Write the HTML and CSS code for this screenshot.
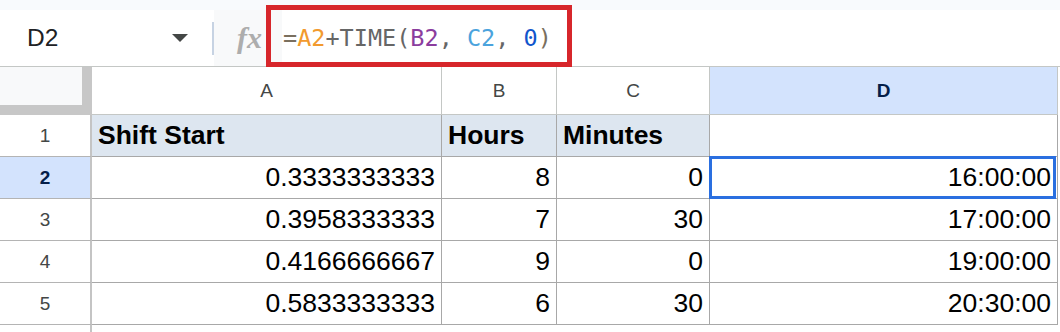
FILE: index.html
```html
<!DOCTYPE html>
<html>
<head lang="en">
    <meta charset="UTF-8">
    <title>Shift end times</title>
    <link rel="stylesheet" href="styles.css">
</head>
<body>
<div class="sheet">
    <div class="top-strip"></div>
    <div class="formula-bar">
        <div class="name-box">
            <span>D2</span>
            <svg width="16" height="8" viewBox="0 0 16 8"><path d="M0 0 L16 0 L8 8 Z" fill="#444746"/></svg>
        </div>
        <div class="divider"></div>
        <div class="fx">fx</div>
        <div class="formula"><span class="f-eq">=</span><span class="f-a">A2</span>+TIME(<span class="f-b">B2</span>, <span class="f-c">C2</span>, <span class="f-num">0</span><span class="f-eq">)</span></div>
        <div class="formula-mark"></div>
    </div>
    <div class="grid">
        <div class="corner"></div>
        <div class="col-head">A</div>
        <div class="col-head">B</div>
        <div class="col-head">C</div>
        <div class="col-head sel">D</div>

        <div class="row-head">1</div>
        <div class="label">Shift Start</div>
        <div class="label">Hours</div>
        <div class="label">Minutes</div>
        <div></div>

        <div class="row-head sel">2</div>
        <div class="num">0.3333333333</div>
        <div class="num">8</div>
        <div class="num">0</div>
        <div class="num active">16:00:00</div>

        <div class="row-head">3</div>
        <div class="num">0.3958333333</div>
        <div class="num">7</div>
        <div class="num">30</div>
        <div class="num">17:00:00</div>

        <div class="row-head">4</div>
        <div class="num">0.4166666667</div>
        <div class="num">9</div>
        <div class="num">0</div>
        <div class="num">19:00:00</div>

        <div class="row-head">5</div>
        <div class="num">0.5833333333</div>
        <div class="num">6</div>
        <div class="num">30</div>
        <div class="num">20:30:00</div>

        <div class="row-head tail"></div>
        <div class="tail"></div>
        <div class="tail"></div>
        <div class="tail"></div>
        <div class="tail"></div>
    </div>
</div>
</body>
</html>
```

FILE: styles.css
```css
body {
    margin: 0;
    background: #fff;
    font-family: "Liberation Sans", Arial, sans-serif;
}
.sheet {
    width: 1060px;
}
.top-strip {
    height: 10px;
    background: #f8fafd;
}
.formula-bar {
    position: relative;
    display: flex;
    align-items: center;
    height: 56px;
    border-bottom: 1px solid #c4c7c5;
}
.name-box {
    display: flex;
    align-items: center;
    width: 212px;
    height: 100%;
    padding-left: 27px;
    box-sizing: border-box;
    font-size: 24.5px;
    color: #202124;
}
.name-box svg {
    margin-left: auto;
    margin-right: 24px;
}
.divider {
    width: 2px;
    height: 33px;
    background: #c7d3e3;
}
.fx {
    display: flex;
    align-items: center;
    width: 68px;
    height: 100%;
    padding-left: 23px;
    box-sizing: border-box;
    background: #f8f9fa;
    font: italic bold 30px "Liberation Serif", serif;
    color: #adadad;
}
.formula {
    flex: 1;
    display: flex;
    align-items: center;
    height: 100%;
    padding-left: 1px;
    font: 23.5px "DejaVu Sans Mono", monospace;
    color: #666;
    white-space: pre;
}
.f-eq { color: #7a6f5e; }
.f-a { color: #f29a2e; }
.f-b { color: #8b3d9e; }
.f-c { color: #4ba3dd; }
.f-num { color: #1155cc; }
.formula-mark {
    position: absolute;
    left: 266px;
    top: -5px;
    width: 306px;
    height: 62px;
    border: 5px solid #d7262b;
    box-sizing: border-box;
}
.grid {
    display: grid;
    grid-template-columns: 92px 350px 115px 153px 348px;
    grid-template-rows: 48px repeat(5, 42px) 7px;
}
.grid > div {
    display: flex;
    align-items: center;
    padding: 0 6px;
    box-sizing: border-box;
    border-right: 1px solid #a8a8a8;
    border-bottom: 1px solid #a8a8a8;
    font-size: 26.5px;
    color: #000;
}
.grid > .corner {
    padding: 0;
    background: #f8f9fa;
    border-right: 10px solid #c7c7c7;
    border-bottom: 10px solid #c7c7c7;
}
.grid > .col-head {
    justify-content: center;
    border-color: #c4c7c5;
    font-size: 19px;
    color: #444746;
}
.grid > .row-head {
    justify-content: center;
    border-right: 2px solid #c4c4c4;
    border-bottom-color: #b4b4b4;
    font-size: 19px;
    color: #444746;
}
.grid > .sel {
    background: #d3e3fd;
    color: #041e49;
    font-weight: bold;
}
.grid > .label {
    background: #dde6f0;
    font-weight: bold;
}
.grid > .num {
    justify-content: flex-end;
}
.grid > .active {
    position: relative;
}
.active::after {
    content: "";
    position: absolute;
    left: -1px;
    top: -1px;
    right: 1px;
    bottom: -1px;
    border: 3px solid #2a6fe0;
}
.grid > .tail {
    border: 0;
}
.grid > .row-head.tail {
    border-right: 2px solid #c4c4c4;
}
```
